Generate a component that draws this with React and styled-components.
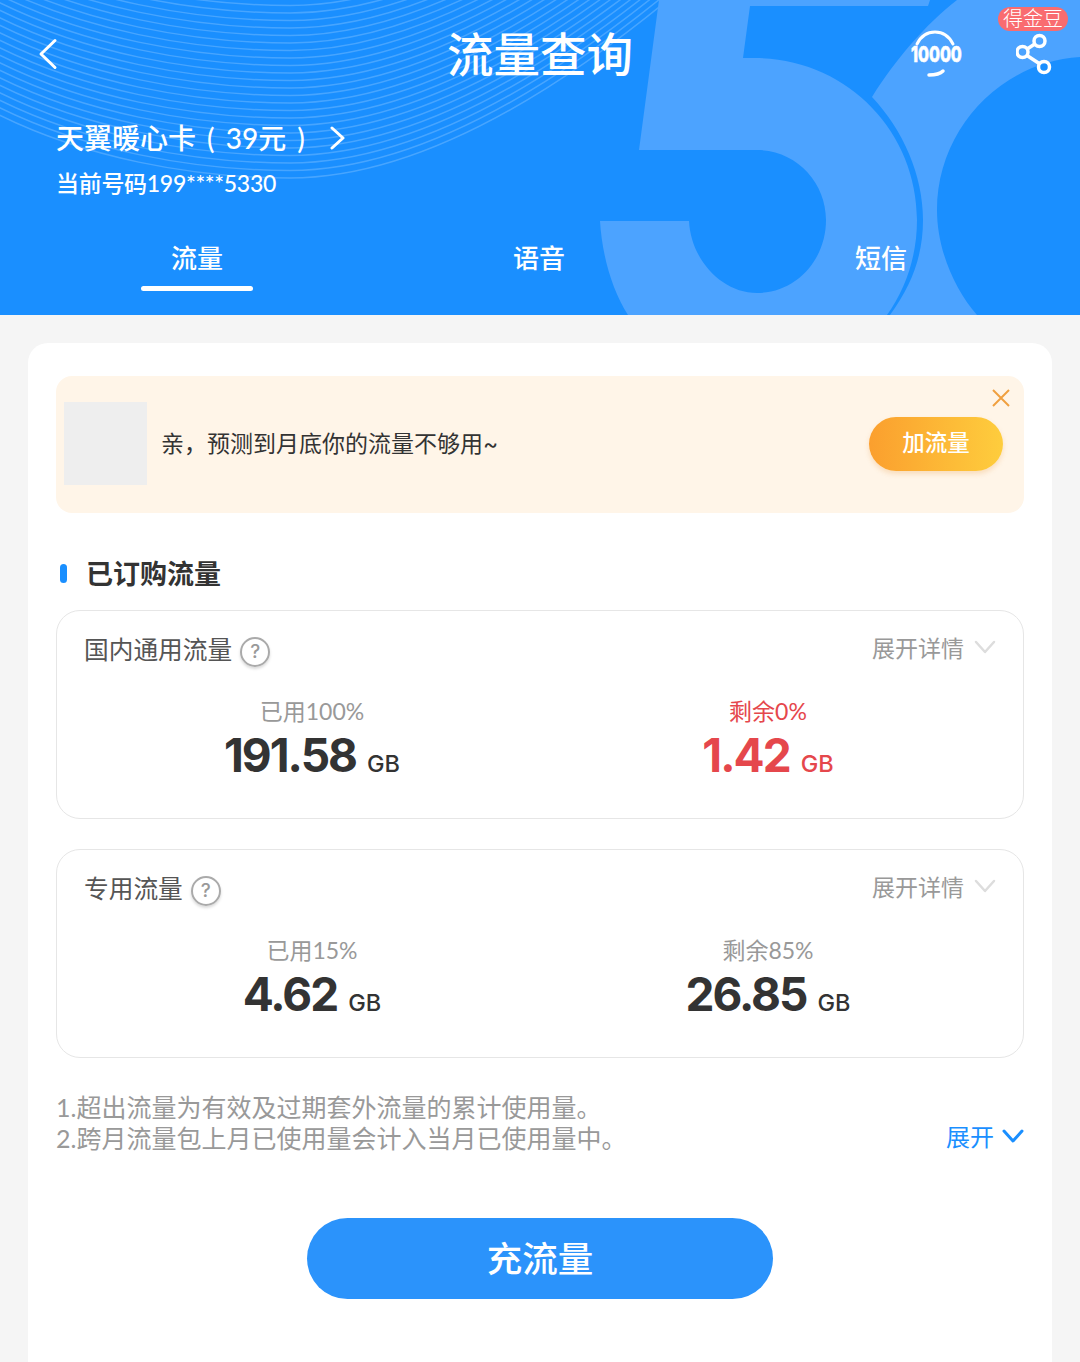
import React from "react";
import styled, { createGlobalStyle } from "styled-components";

const Global = createGlobalStyle`
  html, body { margin: 0; padding: 0; background: #f5f5f5; }
  body { width: 1080px; height: 1362px; overflow: hidden; font-family: Inter, "Noto Sans CJK SC", sans-serif; }
  * { box-sizing: border-box; }
`;

const Header = styled.header`
  position: relative;
  height: 315px;
  padding-top: 14px;
  background: #1a8fff;
  color: #fff;
  overflow: hidden;
`;
const Art = styled.svg`
  position: absolute;
  inset: 0;
`;
const HeaderBody = styled.div`
  position: relative;
`;
const Nav = styled.div`
  display: grid;
  grid-template-columns: 1fr auto 1fr;
  align-items: center;
  height: 80px;
  padding: 0 28px 0 28px;
`;
const BackSlot = styled.div`
  display: flex;
  padding-left: 9px;
`;
const Title = styled.h1`
  margin: 0 0 4px;
  font: 500 46.5px/56px "Noto Sans CJK SC", sans-serif;
`;
const NavActions = styled.div`
  display: flex;
  justify-content: flex-end;
  align-items: center;
  gap: 54px;
`;
const ShareWrap = styled.div`
  position: relative;
  display: flex;
`;
const Badge = styled.span`
  position: absolute;
  top: -26px;
  left: -18px;
  width: 70px;
  height: 24px;
  border-radius: 12px;
  background: #f96c70;
  font: 300 20px/22px "Noto Sans CJK SC", sans-serif;
  text-align: center;
  white-space: nowrap;
`;
const Info = styled.div`
  margin-top: 26px;
  padding-left: 56px;
`;
const PlanName = styled.div`
  display: flex;
  align-items: center;
  gap: 24px;
  font: 500 28px/36px Lato, "Noto Sans CJK SC", sans-serif;
  word-spacing: 4px;
`;
const Phone = styled.div`
  margin-top: 12px;
  font: 500 23px/30px Lato, "Noto Sans CJK SC", sans-serif;
  letter-spacing: -0.3px;
`;
const Tabs = styled.div`
  display: grid;
  grid-template-columns: repeat(3, 342px);
  margin-top: 41px;
  padding-left: 26px;
`;
const TabLabel = styled.span`
  height: 40px;
  margin-top: -2px;
  margin-bottom: 2px;
`;
const Tab = styled.div`
  display: flex;
  flex-direction: column;
  align-items: center;
  height: 52px;
  font: 500 26px/40px "Noto Sans CJK SC", sans-serif;
  &::after {
    content: "";
    width: 112px;
    height: 5px;
    margin-top: 7px;
    border-radius: 3px;
    background: ${(p) => (p.$active ? "#fff" : "transparent")};
  }
`;

const Main = styled.main`
  padding: 28px 28px 0;
`;
const Card = styled.section`
  height: 1019px;
  padding: 33px 28px 0;
  border-radius: 20px 20px 0 0;
  background: #fff;
`;
const Banner = styled.div`
  position: relative;
  display: flex;
  align-items: center;
  height: 137px;
  padding: 0 21px 2px 8px;
  border-radius: 16px;
  background: #fff5e8;
`;
const Thumb = styled.div`
  flex: none;
  width: 83px;
  height: 83px;
  background: #eeeeee;
`;
const BannerText = styled.p`
  flex: 1;
  margin: 0 0 0 14px;
  color: #333;
  font: 400 23px/32px Inter, "Noto Sans CJK SC", sans-serif;
`;
const BannerButton = styled.button`
  width: 134px;
  height: 54px;
  padding: 0 0 5px;
  border: 0;
  border-radius: 27px;
  background: linear-gradient(90deg, #fb9f2e, #fecd3d);
  box-shadow: 0 3px 5px rgba(230, 150, 60, 0.25);
  color: #fff;
  font: 500 22.5px/49px "Noto Sans CJK SC", sans-serif;
`;
const CloseButton = styled.svg`
  position: absolute;
  top: 12px;
  right: 13px;
`;
const SectionTitle = styled.h2`
  display: flex;
  align-items: center;
  gap: 19px;
  margin: 40px 0 17px;
  padding-left: 4px;
  color: #333;
  font: 700 27px/40px "Noto Sans CJK SC", sans-serif;
  &::before {
    content: "";
    width: 7px;
    height: 19px;
    border-radius: 4px;
    background: #1a8fff;
  }
`;
const Box = styled.div`
  height: 209px;
  margin-bottom: 30px;
  padding: 20px 27px 0;
  border: 1px solid #e6e6e6;
  border-radius: 24px;
`;
const BoxHead = styled.div`
  display: flex;
  align-items: center;
  height: 36px;
`;
const BoxTitle = styled.span`
  margin-top: -2px;
  color: #555;
  font: 400 24.7px/36px "Noto Sans CJK SC", sans-serif;
`;
const Help = styled.span`
  width: 30px;
  height: 30px;
  margin: 6px 0 0 8px;
  border: 2px solid #aaa;
  border-radius: 50%;
  box-shadow: 0 2px 3px rgba(0, 0, 0, 0.15);
  color: #999;
  font: 500 19px/26px Inter, sans-serif;
  text-align: center;
`;
const Toggle = styled.span`
  display: flex;
  align-items: center;
  gap: 10px;
  margin-left: auto;
  margin-top: -5px;
  color: #999;
  font: 400 23px/32px "Noto Sans CJK SC", sans-serif;
`;
const Stats = styled.div`
  display: grid;
  grid-template-columns: 456px 456px;
  margin-top: 29px;
`;
const Stat = styled.div`
  text-align: center;
  color: ${(p) => p.$color};
`;
const StatLabel = styled.div`
  color: ${(p) => p.$color || "#999"};
  font: 400 23px/30px Lato, "Noto Sans CJK SC", sans-serif;
`;
const StatValue = styled.div`
  margin-top: 1px;
  font: 700 46px/56px Inter, sans-serif;
  letter-spacing: -2px;
`;
const StatUnit = styled.span`
  margin-left: 11px;
  font: 500 23.5px/56px Inter, sans-serif;
  letter-spacing: 0;
`;
const NotesRow = styled.div`
  display: flex;
  align-items: flex-end;
  justify-content: space-between;
  margin-top: 34px;
`;
const Notes = styled.div`
  color: #999;
  font: 400 25px/31px Lato, "Noto Sans CJK SC", sans-serif;
`;
const Expand = styled.span`
  display: flex;
  align-items: center;
  gap: 8px;
  margin-bottom: 2px;
  color: #1a8fff;
  font: 400 24px/32px "Noto Sans CJK SC", sans-serif;
`;
const Recharge = styled.button`
  display: block;
  width: 466px;
  height: 81px;
  margin: 64px auto 0;
  padding: 0 0 4px;
  border: 0;
  border-radius: 41px;
  background: #2b93fb;
  color: #fff;
  font: 500 35.5px/77px "Noto Sans CJK SC", sans-serif;
`;

const arcs = Array.from({ length: 24 }, (_, i) => i * 7.5);

const HeaderArt = () => (
  <Art width="1080" height="315" viewBox="0 0 1080 315">
    <g fill="none" stroke="#fff" strokeOpacity="0.2" strokeWidth="1.5">
      {arcs.map((d) => (
        <path
          key={d}
          d={`M-20 ${105 - d} C80 ${160 - d} 200 ${178 - d} 290 ${178 - d} C420 ${178 - d} 560 ${90 - d} 680 ${-10 - d}`}
        />
      ))}
    </g>
    <path
      fill="#4ca3ff"
      d="M957 0H1080V57C1000 62 937 130 937 210C937 250 955 290 977 315H890C912 285 923 255 923 220C923 175 903 130 872 97C895 60 925 25 957 0Z"
    />
    <path
      fill="#4ca3ff"
      d="M659 0H930L928 6H750L743 58H755C845 58 917 130 917 220C917 257 905 290 887 315H628C612 290 602 255 600 221H689C691 260 722 293 757 293C796 293 826 260 826 220C826 182 796 150 757 150H639Z"
    />
  </Art>
);

const BackIcon = () => (
  <svg width="24" height="32" viewBox="0 0 24 32" fill="none" stroke="#fff" strokeWidth="3" strokeLinecap="round" strokeLinejoin="round">
    <path d="M18 2.5 4 16l14 13.5" />
  </svg>
);

const ServiceIcon = () => (
  <svg width="52" height="48" viewBox="0 0 52 48" fill="none" stroke="#fff" strokeWidth="3" strokeLinecap="round">
    <path d="M7 14C11 6 18 2 25 2s14 4 18 12" />
    <path d="M19 45c6 0 11-1 14-4" strokeWidth="3.5" />
    <text transform="translate(1 32) scale(0.72 1)" fill="#fff" stroke="#fff" strokeWidth="0.6" fontFamily="Inter, sans-serif" fontWeight="800" fontSize="22">10000</text>
  </svg>
);

const ShareIcon = () => (
  <svg width="36" height="42" viewBox="0 0 36 42" fill="none" stroke="#fff" strokeWidth="3.5">
    <circle cx="23.5" cy="8" r="5.5" />
    <circle cx="6.5" cy="19" r="5.5" />
    <circle cx="28" cy="34" r="5.5" />
    <path d="m18.8 11-7.6 5M11 22.5 23.2 30.5" />
  </svg>
);

const RightChevron = () => (
  <svg width="16" height="26" viewBox="0 0 16 26" fill="none" stroke="#fff" strokeWidth="3" strokeLinecap="round" strokeLinejoin="round">
    <path d="m3 3 11 10L3 23" />
  </svg>
);

const DownChevron = ({ color = "#ddd", width = 22, height = 14, sw = 2.5 }) => (
  <svg width={width} height={height} viewBox="0 0 22 14" fill="none" stroke={color} strokeWidth={sw} strokeLinecap="round" strokeLinejoin="round">
    <path d="m2 2 9 10 9-10" />
  </svg>
);

const UsageBox = ({ title, used, left, leftColor }) => (
  <Box>
    <BoxHead>
      <BoxTitle>{title}</BoxTitle>
      <Help>?</Help>
      <Toggle>
        展开详情
        <DownChevron />
      </Toggle>
    </BoxHead>
    <Stats>
      <Stat $color="#333">
        <StatLabel>{used[0]}</StatLabel>
        <StatValue>
          {used[1]}
          <StatUnit>GB</StatUnit>
        </StatValue>
      </Stat>
      <Stat $color={leftColor || "#333"}>
        <StatLabel $color={leftColor}>{left[0]}</StatLabel>
        <StatValue>
          {left[1]}
          <StatUnit>GB</StatUnit>
        </StatValue>
      </Stat>
    </Stats>
  </Box>
);

export default function App() {
  return (
    <>
      <Global />
      <Header>
        <HeaderArt />
        <HeaderBody>
          <Nav>
            <BackSlot>
              <BackIcon />
            </BackSlot>
            <Title>流量查询</Title>
            <NavActions>
              <ServiceIcon />
              <ShareWrap>
                <Badge>得金豆</Badge>
                <ShareIcon />
              </ShareWrap>
            </NavActions>
          </Nav>
          <Info>
            <PlanName>
              天翼暖心卡 ( 39元 )
              <RightChevron />
            </PlanName>
            <Phone>当前号码199****5330</Phone>
          </Info>
          <Tabs>
            <Tab $active><TabLabel>流量</TabLabel></Tab>
            <Tab><TabLabel>语音</TabLabel></Tab>
            <Tab><TabLabel>短信</TabLabel></Tab>
          </Tabs>
        </HeaderBody>
      </Header>
      <Main>
        <Card>
          <Banner>
            <Thumb />
            <BannerText>亲，预测到月底你的流量不够用~</BannerText>
            <BannerButton>加流量</BannerButton>
            <CloseButton width="20" height="20" viewBox="0 0 20 20" fill="none" stroke="#f0a040" strokeWidth="2">
              <path d="m2 2 16 16M18 2 2 18" />
            </CloseButton>
          </Banner>
          <SectionTitle>已订购流量</SectionTitle>
          <UsageBox title="国内通用流量" used={["已用100%", "191.58"]} left={["剩余0%", "1.42"]} leftColor="#e5474c" />
          <UsageBox title="专用流量" used={["已用15%", "4.62"]} left={["剩余85%", "26.85"]} />
          <NotesRow>
            <Notes>
              1.超出流量为有效及过期套外流量的累计使用量。
              <br />
              2.跨月流量包上月已使用量会计入当月已使用量中。
            </Notes>
            <Expand>
              展开
              <DownChevron color="#1a8fff" sw={3} />
            </Expand>
          </NotesRow>
          <Recharge>充流量</Recharge>
        </Card>
      </Main>
    </>
  );
}
